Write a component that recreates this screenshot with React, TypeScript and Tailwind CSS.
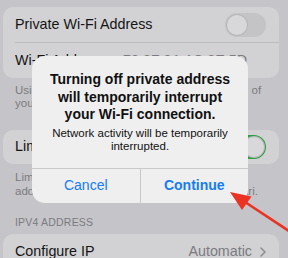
import React from 'react'

const Toggle = ({ on }: { on?: boolean }) => (
  <div
    className={`flex h-[24px] w-[41px] items-center rounded-full p-[2px] ${
      on ? 'justify-end bg-[#2c9f45]' : 'justify-start bg-[#c4c4c6]'
    }`}
  >
    <div className="h-[20px] w-[20px] rounded-full bg-[#d8d8da] shadow-[0_0_0_1px_#b8b8ba]" />
  </div>
)

export default function App() {
  return (
    <div
      className="relative h-[258px] w-[288px] overflow-hidden bg-[#c5c5c9] px-[3px] pt-[7px] pr-[9px]"
      style={{ fontFamily: '"Liberation Sans", Arial, sans-serif' }}
    >
      {/* settings list (dimmed) */}
      <div className="rounded-[10px] bg-[#d2d2d4] text-[14.3px] text-[#151515]">
        <div className="flex h-[35px] items-center justify-between pl-3 pr-[13px]">
          <span>Private Wi-Fi Address</span>
          <Toggle />
        </div>
        <div className="ml-3 h-px bg-[#bcbcbe]" />
        <div className="flex h-[35px] items-center justify-between pl-3 pr-[32px]">
          <span>Wi-Fi Address</span>
          <span className="text-[#7d7d81]">72:3F:8A:1C:0E:5D</span>
        </div>
      </div>
      <p className="mt-[6px] px-3 text-[11.5px] leading-[13px] text-[#7b7b80]">
        Using a private address helps reduce tracking of your iPhone across different Wi-Fi
        networks.
      </p>

      <div className="mt-[20px] flex h-[34px] items-center justify-between rounded-[10px] bg-[#d2d2d4] pl-3 pr-[13px] text-[14.3px] text-[#151515]">
        <span>Limit IP Address Tracking</span>
        <Toggle on />
      </div>
      <p className="mt-[6px] px-3 text-[11.5px] leading-[14px] text-[#7b7b80]">
        Limit IP address tracking by hiding your IP address from known trackers in Mail and
        Safari.
      </p>

      <p className="mt-[18px] px-3 text-[10.5px] leading-[13px] tracking-[0.2px] text-[#7b7b80]">
        IPV4 ADDRESS
      </p>
      <div className="mt-[5px] flex h-[35px] items-center justify-between rounded-[10px] bg-[#d2d2d4] pl-3 pr-[13px] text-[14.3px]">
        <span className="text-[#151515]">Configure IP</span>
        <span className="flex items-center gap-[8px] text-[#7b7b80]">
          Automatic
          <svg width="6" height="10" viewBox="0 0 6 10" fill="none">
            <path d="M1 1l4 4-4 4" stroke="#8e8e92" strokeWidth="1.6" strokeLinecap="round" strokeLinejoin="round" />
          </svg>
        </span>
      </div>

      {/* alert */}
      <div className="absolute left-[32px] top-[56px] flex w-[216px] flex-col rounded-[13px] bg-[#efeff0] text-center">
        <div className="px-3 pt-[15px] pb-[15px]">
          <p className="text-[14px] font-bold leading-[17.5px] text-[#111]">
            Turning off private address will temporarily interrupt your Wi-Fi connection.
          </p>
          <p className="mt-[3px] text-[11.5px] leading-[13px] text-[#111]">
            Network activity will be temporarily interrupted.
          </p>
        </div>
        <div className="flex h-[35px] border-t border-[#c9c9cb] text-[14px] text-[#167cf5]">
          <div className="flex flex-1 items-center justify-center">Cancel</div>
          <div className="w-px bg-[#c9c9cb]" />
          <div className="flex flex-1 items-center justify-center font-bold">Continue</div>
        </div>
      </div>

      {/* red arrow */}
      <svg className="pointer-events-none absolute left-0 top-0" width="288" height="258" viewBox="0 0 288 258">
        <line x1="289" y1="231" x2="245" y2="202" stroke="#ea3323" strokeWidth="2.6" strokeLinecap="round" />
        <polygon points="230,192 251.5,196.5 242,210" fill="#ea3323" />
      </svg>
    </div>
  )
}
